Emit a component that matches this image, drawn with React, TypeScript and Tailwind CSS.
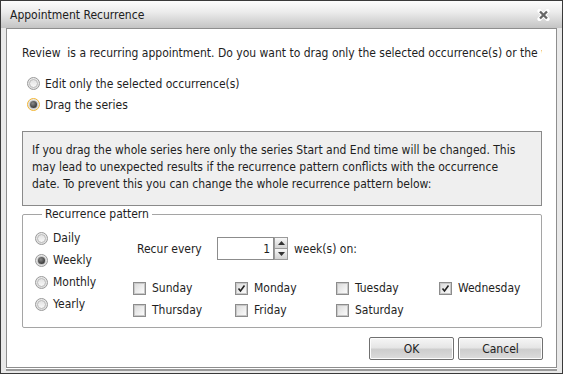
import { useState } from 'react';

const font = { fontFamily: '"DejaVu Sans Condensed", "DejaVu Sans", sans-serif' };

const Radio = ({ checked, focused }: { checked?: boolean; focused?: boolean }) => (
  <span
    className={`relative flex h-[13px] w-[13px] shrink-0 items-center justify-center rounded-full border ${
      focused ? 'border-[#f2b533]' : 'border-[#9a9a9a]'
    } bg-[radial-gradient(circle_at_50%_40%,#ffffff,#d4d4d4)]`}
  >
    <span className="flex h-[9px] w-[9px] items-center justify-center rounded-full border border-[#b9b9b9] bg-[linear-gradient(#e2e2e2,#f8f8f8)]">
      {checked && (
        <span className="h-[7px] w-[7px] rounded-full bg-[radial-gradient(circle_at_40%_35%,#8a8a8a,#1a1a1a)]" />
      )}
    </span>
  </span>
);

const Check = ({ checked }: { checked?: boolean }) => (
  <span className="flex h-[13px] w-[13px] shrink-0 items-center justify-center border border-[#8c8c8c] bg-white">
    <span className="flex h-[11px] w-[11px] items-center justify-center border border-[#c8c8c8] bg-[linear-gradient(135deg,#dcdcdc,#fbfbfb)]">
      {checked && (
        <svg width="9" height="9" viewBox="0 0 9 9">
          <path d="M1.5 4.5 L3.5 7 L7.5 1.5" stroke="#222" strokeWidth="1.6" fill="none" />
        </svg>
      )}
    </span>
  </span>
);

const Button = ({ label }: { label: string }) => (
  <button className="flex h-[23px] w-[85px] items-center justify-center rounded-[2px] border border-[#707070] bg-[linear-gradient(#f6f6f6_0%,#e6e6e6_45%,#cdcdcd_55%,#dcdcdc_100%)] text-[12px] text-[#1e1e1e] shadow-[inset_0_0_0_1px_#fcfcfc]">
    {label}
  </button>
);

const days = [
  ['Sunday', false],
  ['Monday', true],
  ['Tuesday', false],
  ['Wednesday', true],
  ['Thursday', false],
  ['Friday', false],
  ['Saturday', false],
] as const;

export default function App() {
  const [pattern] = useState('Weekly');

  return (
    <div
      className="flex h-[374px] w-[563px] flex-col overflow-hidden border border-[#3a3a3a] bg-[#e9e9e9] text-[12px] text-[#1e1e1e]"
      style={font}
    >
      {/* title bar */}
      <div className="flex h-[27px] shrink-0 items-center justify-between bg-[linear-gradient(#fdfdfd_0%,#ececec_40%,#c4c4c4_100%)] pl-[9px] pr-[12px]">
        <span className="text-[12px] text-[#202020]">Appointment Recurrence</span>
        <svg width="13" height="12" viewBox="0 0 13 12">
          <path d="M2.5 2 L10.5 10 M10.5 2 L2.5 10" stroke="#ffffff" strokeWidth="4.2" strokeLinecap="round" />
          <path d="M3 2.5 L10 9.5 M10 2.5 L3 9.5" stroke="#666666" strokeWidth="2.4" />
        </svg>
      </div>

      <div className="flex flex-1 flex-col px-[5px] pb-[5px]">
        <div className="flex flex-1 flex-col overflow-hidden border border-[#8e8e8e] bg-white pl-[15px] pr-[14px] shadow-[0_1px_0_0_#ffffff,0_3px_0_0_#9a9a9a]">
          <div className="mt-[16px] overflow-hidden whitespace-nowrap leading-[17px]">
            Review &nbsp;is a recurring appointment. Do you want to drag only the selected occurrence(s) or the whole series?
          </div>

          <div className="mt-[11px] flex flex-col pl-[5px]">
            <label className="flex h-[21px] items-center gap-[5px]">
              <Radio />
              <span>Edit only the selected occurrence(s)</span>
            </label>
            <label className="flex h-[21px] items-center gap-[5px]">
              <Radio checked focused />
              <span>Drag the series</span>
            </label>
          </div>

          <div className="mt-[16px] border border-[#8a8a8a] bg-[#efefef] pb-[12px] pl-[9px] pr-[20px] pt-[10px] leading-[17px]">
            If you drag the whole series here only the series Start and End time will be changed. This may lead to unexpected results if the recurrence pattern conflicts with the occurrence date. To prevent this you can change the whole recurrence pattern below:
          </div>

          <fieldset className="rounded-[2px] border border-[#a5a5a5] pb-[6px] pl-[12px]">
            <legend className="ml-[7px] px-[3px] leading-[17px]">Recurrence pattern</legend>
            <div className="mt-[4px] flex">
              <div className="flex w-[98px] flex-col">
                {['Daily', 'Weekly', 'Monthly', 'Yearly'].map((p) => (
                  <label key={p} className="flex h-[22px] items-center gap-[5px]">
                    <Radio checked={p === pattern} />
                    <span>{p}</span>
                  </label>
                ))}
              </div>
              <div className="flex flex-1 flex-col">
                <div className="mt-[10px] flex h-[23px] items-center">
                  <span className="ml-[4px] w-[80px]">Recur every</span>
                  <div className="flex h-[23px] items-stretch">
                    <div className="flex w-[57px] items-center justify-end border border-[#8c8c8c] bg-white pr-[3px]">
                      1
                    </div>
                    <div className="flex w-[14px] flex-col">
                      <span className="flex flex-1 items-center justify-center border border-[#9a9a9a] bg-[linear-gradient(#f7f7f7,#d2d2d2)]">
                        <svg width="7" height="4" viewBox="0 0 7 4">
                          <path d="M0 4 L3.5 0 L7 4 Z" fill="#333" />
                        </svg>
                      </span>
                      <span className="flex flex-1 items-center justify-center border border-t-0 border-[#9a9a9a] bg-[linear-gradient(#f7f7f7,#d2d2d2)]">
                        <svg width="7" height="4" viewBox="0 0 7 4">
                          <path d="M0 0 L3.5 4 L7 0 Z" fill="#333" />
                        </svg>
                      </span>
                    </div>
                  </div>
                  <span className="ml-[6px]">week(s) on:</span>
                </div>
                <div className="mt-[17px] grid grid-cols-[102px_101px_103px_1fr]">
                  {days.map(([d, c]) => (
                    <label key={d} className="flex h-[22px] items-center gap-[6px]">
                      <Check checked={c} />
                      <span>{d}</span>
                    </label>
                  ))}
                </div>
              </div>
            </div>
          </fieldset>

          <div className="mr-[-1px] mt-[9px] flex justify-end gap-[4px]">
            <Button label="OK" />
            <Button label="Cancel" />
          </div>
        </div>
      </div>
    </div>
  );
}
